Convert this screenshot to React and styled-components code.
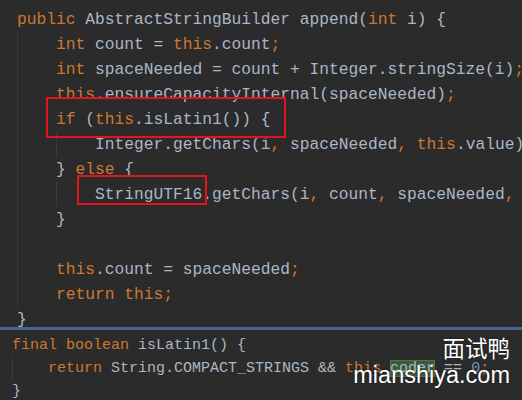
import React from 'react'
import styled, { createGlobalStyle } from 'styled-components'

const Global = createGlobalStyle`
  html, body {
    margin: 0;
    padding: 0;
    background: #2b2b2b;
  }
`

const Screen = styled.div`
  position: relative;
  width: 522px;
  height: 400px;
  overflow: hidden;
  background: #2b2b2b;
  display: flex;
  flex-direction: column;
`

const Pane = styled.div`
  font-family: "Liberation Mono", "DejaVu Sans Mono", monospace;
  font-size: ${p => p.$size}px;
  line-height: ${p => p.$lh}px;
  color: #a9b7c6;
  white-space: pre;
  overflow: hidden;
  padding: ${p => p.$pad};
  height: ${p => p.$h}px;
  box-sizing: border-box;
`

const Divider = styled.div`
  height: 3px;
  background: #47648a;
  border-bottom: 1px solid #22303d;
  flex-shrink: 0;
`

const Line = styled.div`
  height: ${p => p.$lh}px;
`

const Guide = styled.span`
  display: inline-block;
  width: 4ch;
  height: 100%;
  vertical-align: top;
  box-shadow: inset 1px 0 0 ${p => (p.$on ? '#3a3a3a' : 'transparent')};
`

const Kw = styled.span`
  color: #cc7832;
`

const Num = styled.span`
  color: #6897bb;
`

const Mark = styled.span`
  position: relative;
  display: inline-block;
  &::after {
    content: '';
    position: absolute;
    top: ${p => p.$t}px;
    bottom: ${p => p.$b}px;
    left: ${p => p.$l}px;
    right: ${p => p.$r}px;
    border: 2px solid #e3141c;
  }
`

const Caret = styled.span`
  background: #3a5a3c;
  box-shadow: inset 0 0 0 1px #4c744d;
`

const Watermark = styled.div`
  position: absolute;
  right: 12px;
  bottom: 11px;
  display: flex;
  flex-direction: column;
  align-items: flex-end;
  color: #ffffff;
  text-shadow: 0 0 2px rgba(0, 0, 0, 0.5);
`

const BrandCn = styled.div`
  font-family: "Noto Sans CJK SC", sans-serif;
  font-size: 22.5px;
  line-height: 27px;
`

const BrandUrl = styled.div`
  font-family: "Liberation Sans", Arial, sans-serif;
  font-size: 23.5px;
  line-height: 28px;
`

const Code = ({ lh, level = 0, guides = level, children }) => (
  <Line $lh={lh}>
    {Array.from({ length: level }).map((_, i) => (
      <Guide key={i} $on={i < guides} />
    ))}
    {children}
  </Line>
)

const App = () => {
  const top = 25
  const bot = 23
  return (
    <Screen>
      <Global />
      <Pane $size={16.25} $lh={top} $pad="6.5px 0 0 17px" $h={327}>
        <Code lh={top}><Kw>public</Kw> AbstractStringBuilder append(<Kw>int</Kw> i) {'{'}</Code>
        <Code lh={top} level={1}><Kw>int</Kw> count = <Kw>this</Kw>.count<Kw>;</Kw></Code>
        <Code lh={top} level={1}><Kw>int</Kw> spaceNeeded = count + Integer.stringSize(i)<Kw>;</Kw></Code>
        <Code lh={top} level={1}><Kw>this</Kw>.ensureCapacityInternal(spaceNeeded)<Kw>;</Kw></Code>
        <Code lh={top} level={1}>
          <Mark $t={-9.5} $b={-6.5} $l={-10} $r={-15.5}><Kw>if</Kw> (<Kw>this</Kw>.isLatin1()) {'{'}</Mark>
        </Code>
        <Code lh={top} level={2}>Integer.getChars(i<Kw>,</Kw> spaceNeeded<Kw>,</Kw> <Kw>this</Kw>.value)<Kw>;</Kw></Code>
        <Code lh={top} level={1}>{'} '}<Kw>else</Kw> {'{'}</Code>
        <Code lh={top} level={2}>
          <Mark $t={-6.5} $b={1.5} $l={-18} $r={-4.75}>StringUTF16</Mark>.getChars(i<Kw>,</Kw> count<Kw>,</Kw> spaceNeeded<Kw>,</Kw> <Kw>this</Kw>.value)<Kw>;</Kw>
        </Code>
        <Code lh={top} level={1}>{'}'}</Code>
        <Code lh={top} level={1} />
        <Code lh={top} level={1}><Kw>this</Kw>.count = spaceNeeded<Kw>;</Kw></Code>
        <Code lh={top} level={1}><Kw>return this;</Kw></Code>
        <Code lh={top}>{'}'}</Code>
      </Pane>
      <Divider />
      <Pane $size={15} $lh={bot} $pad="3px 0 0 12px" $h={69}>
        <Code lh={bot}><Kw>final boolean</Kw> isLatin1() {'{'}</Code>
        <Code lh={bot} level={1}>
          <Kw>return</Kw> String.COMPACT_STRINGS &amp;&amp; <Kw>this</Kw>.<Caret>coder</Caret> == <Num>0</Num><Kw>;</Kw>
        </Code>
        <Code lh={bot}>{'}'}</Code>
      </Pane>
      <Watermark>
        <BrandCn>面试鸭</BrandCn>
        <BrandUrl>mianshiya.com</BrandUrl>
      </Watermark>
    </Screen>
  )
}

export default App
